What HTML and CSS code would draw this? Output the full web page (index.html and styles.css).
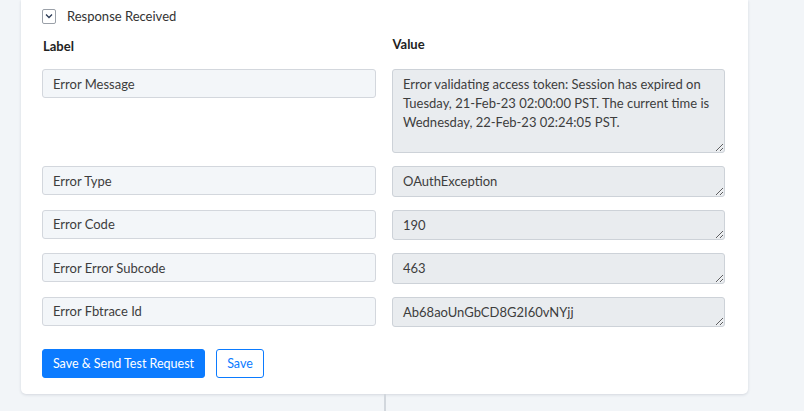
FILE: index.html
```html
<!DOCTYPE html>
<html lang="en">
<head>
<meta charset="utf-8">
<title>Response Received</title>
<link rel="stylesheet" href="styles.css">
</head>
<body>
<div class="flow">
  <section class="card">
    <div class="toggle">
      <span class="toggle-box">
        <svg width="8" height="6" viewBox="0 0 8 6"><path d="M1 1.5 L4 4.5 L7 1.5" fill="none" stroke="#2b3a55" stroke-width="1.3"/></svg>
      </span>
      <span class="toggle-text">Response Received</span>
    </div>

    <div class="heads">
      <div class="head">Label</div>
      <div class="head head-value">Value</div>
    </div>

    <div class="fields">
      <input class="field-label" type="text" value="Error Message" readonly>
      <textarea class="field-value tall" readonly>Error validating access token: Session has expired on Tuesday, 21-Feb-23 02:00:00 PST. The current time is Wednesday, 22-Feb-23 02:24:05 PST.</textarea>

      <input class="field-label" type="text" value="Error Type" readonly>
      <textarea class="field-value" readonly>OAuthException</textarea>

      <input class="field-label" type="text" value="Error Code" readonly>
      <textarea class="field-value" readonly>190</textarea>

      <input class="field-label" type="text" value="Error Error Subcode" readonly>
      <textarea class="field-value" readonly>463</textarea>

      <input class="field-label" type="text" value="Error Fbtrace Id" readonly>
      <textarea class="field-value" readonly>Ab68aoUnGbCD8G2I60vNYjj</textarea>
    </div>

    <div class="actions">
      <button class="btn btn-primary" type="button">Save &amp; Send Test Request</button>
      <button class="btn btn-outline" type="button">Save</button>
    </div>
  </section>
  <div class="connector"></div>
</div>
</body>
</html>
```

FILE: styles.css
```css
* {
  box-sizing: border-box;
}

html, body {
  margin: 0;
  padding: 0;
}

body {
  background: #f2f5f8;
  font-family: Lato, "Noto Sans", sans-serif;
  font-size: 13px;
  color: #3b3b3b;
  overflow: hidden;
}

.flow {
  width: 727px;
  margin-left: 21px;
}

.card {
  background: #fff;
  border-radius: 0 0 5px 5px;
  box-shadow: 0 1px 3px rgba(30, 45, 70, 0.14);
  padding: 8px 23px 16px 21px;
}

/* collapsible header */
.toggle {
  display: flex;
  align-items: center;
  gap: 11px;
  height: 16px;
}

.toggle-box {
  width: 14px;
  height: 15px;
  border: 1px solid #9aa0a8;
  border-radius: 2px;
  display: flex;
  align-items: center;
  justify-content: center;
}

.toggle-text {
  color: #333;
  font-size: 13px;
}

/* column headings */
.heads {
  display: grid;
  grid-template-columns: 1fr 1fr;
  column-gap: 16px;
  margin-top: 13px;
  margin-bottom: 14px;
}

.head {
  font-weight: 700;
  font-size: 13px;
  line-height: 18px;
  color: #222;
  padding-left: 1px;
}

.head-value {
  position: relative;
  top: -2px;
}

/* label / value pairs */
.fields {
  display: grid;
  grid-template-columns: 334px 333px;
  column-gap: 16px;
  row-gap: 13px;
  align-items: start;
}

.field-label,
.field-value {
  font-family: Lato, "Noto Sans", sans-serif;
  font-size: 13px;
  color: #3d3d3d;
  border-radius: 3px;
  margin: 0;
  outline: none;
}

.field-label {
  height: 29px;
  background: #f3f6f9;
  border: 1px solid #d3d7dd;
  padding: 0 10px;
}

.field-value {
  display: block;
  width: 333px;
  height: 30.5px;
  background: #e9ecef;
  border: 1px solid #cdd2d8;
  padding: 5px 10px;
  line-height: 19px;
  resize: both;
  overflow: hidden;
}

.field-value.tall {
  height: 84px;
}

/* buttons */
.actions {
  display: flex;
  gap: 11px;
  margin-top: 22px;
}

.btn {
  height: 29px;
  padding: 0;
  border-radius: 3px;
  font-family: Lato, "Noto Sans", sans-serif;
  font-size: 12.5px;
  white-space: nowrap;
  text-align: center;
  cursor: pointer;
}

.btn-primary {
  width: 163px;
  background: #0b7bff;
  border: 1px solid #0b7bff;
  color: #fff;
}

.btn-outline {
  width: 48px;
  background: #fff;
  border: 1px solid #0b7bff;
  color: #0b7bff;
}

/* line joining this step to the next */
.connector {
  width: 2px;
  height: 20px;
  margin: 0 auto;
  background: #d2d7dd;
}
```
